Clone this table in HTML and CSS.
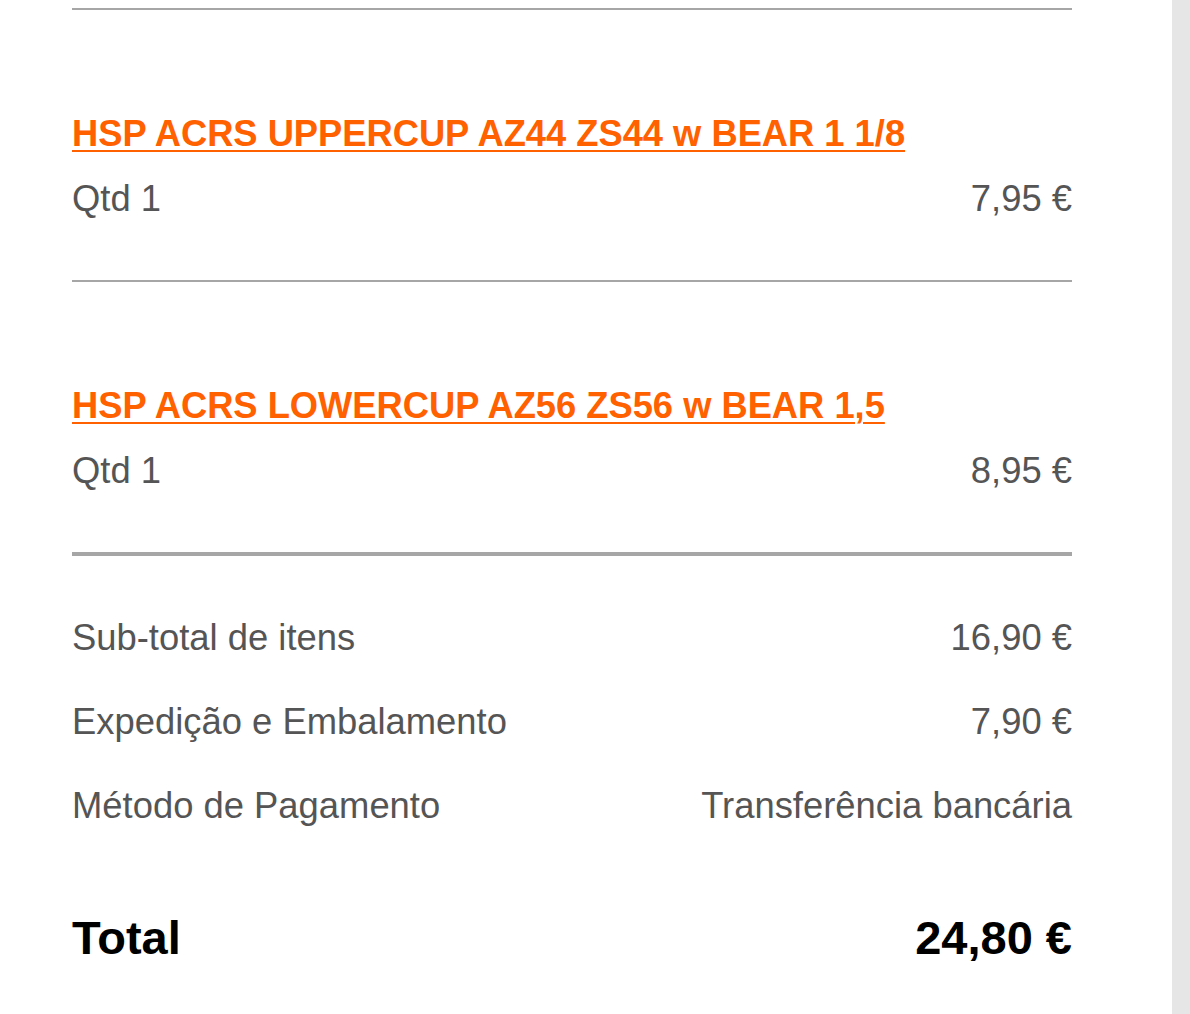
FILE: index.html
```html
<!DOCTYPE html>
<html lang="pt">

<head>
    <meta charset="UTF-8">
    <title>Resumo da encomenda</title>
    <link rel="stylesheet" href="styles.css">
</head>

<body>
    <div class="page">
        <div class="order">
            <div class="item">
                <a class="item-name" href="#">HSP ACRS UPPERCUP AZ44 ZS44 w BEAR 1 1/8</a>
                <div class="row item-qty">
                    <span>Qtd 1</span>
                    <span>7,95 €</span>
                </div>
            </div>
            <div class="item">
                <a class="item-name" href="#">HSP ACRS LOWERCUP AZ56 ZS56 w BEAR 1,5</a>
                <div class="row item-qty">
                    <span>Qtd 1</span>
                    <span>8,95 €</span>
                </div>
            </div>
            <div class="summary">
                <div class="row">
                    <span>Sub-total de itens</span>
                    <span>16,90 €</span>
                </div>
                <div class="row">
                    <span>Expedição e Embalamento</span>
                    <span>7,90 €</span>
                </div>
                <div class="row">
                    <span>Método de Pagamento</span>
                    <span>Transferência bancária</span>
                </div>
                <div class="row total">
                    <span>Total</span>
                    <span>24,80 €</span>
                </div>
            </div>
        </div>
    </div>
    <div class="rail"></div>
</body>

</html>
```

FILE: styles.css
```css
body {
    font-family: "Liberation Sans", Arial, Helvetica, sans-serif;
    display: flex;
    flex-direction: row;
    margin: 0;
    padding: 0;
    background-color: #fff;
    color: #555;
    height: 1014px;
    overflow: hidden;
}

.page {
    flex: 1;
    padding: 8px 0 0 72px;
}

.rail {
    width: 18px;
    background-color: #e6e6e6;
}

.order {
    width: 1000px;
}

.item {
    border-top: 2px solid #a6a6a6;
    padding: 102px 0 59px;
}

.item-name {
    display: block;
    font-size: 36.3px;
    line-height: 44px;
    font-weight: bold;
    color: #ff6000;
    text-decoration: underline;
    text-decoration-thickness: 2px;
    text-underline-offset: 4px;
}

.row {
    display: flex;
    flex-direction: row;
    justify-content: space-between;
    font-size: 36.4px;
    line-height: 44px;
}

.item-qty {
    margin-top: 21px;
}

.summary {
    border-top: 4px solid #a6a6a6;
    padding-top: 60px;
    display: flex;
    flex-direction: column;
    gap: 40px;
}

.total {
    margin-top: 44px;
    font-size: 47px;
    line-height: 52px;
    font-weight: bold;
    color: #000;
}
```
